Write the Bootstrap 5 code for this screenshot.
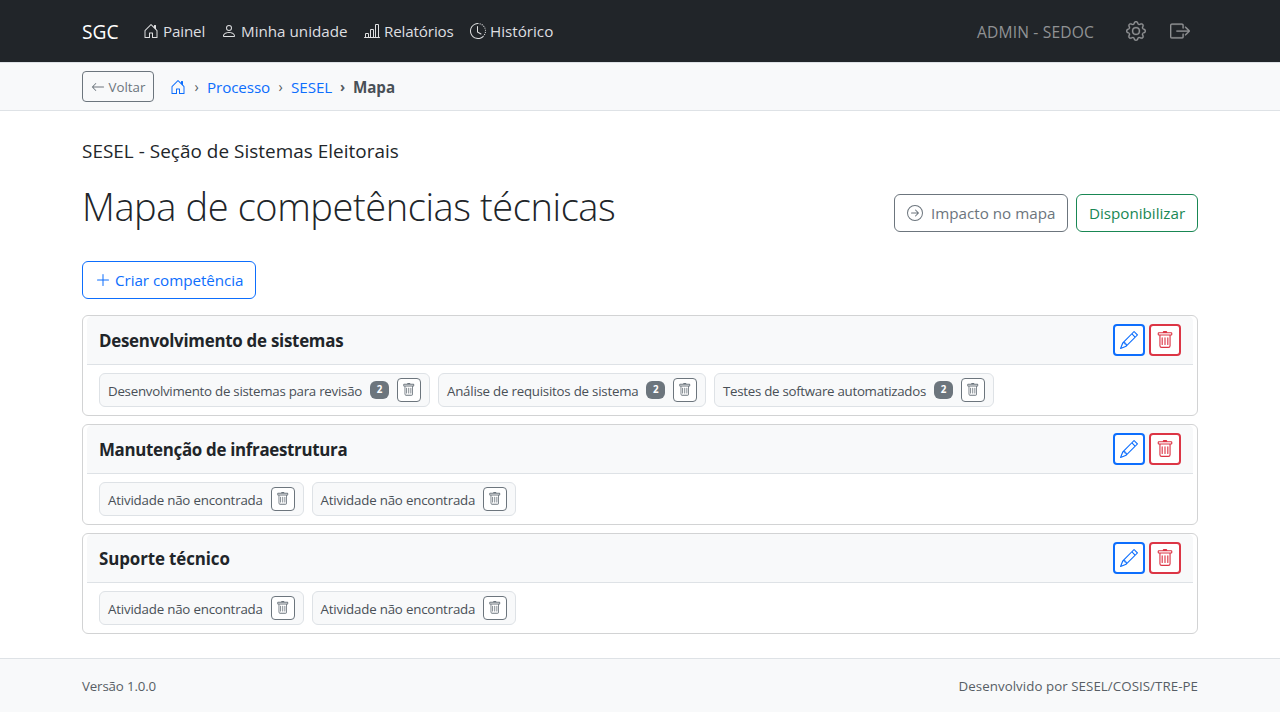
<!DOCTYPE html>
<html lang="pt-BR">
<head>
<meta charset="utf-8">
<meta name="viewport" content="width=device-width, initial-scale=1">
<title>SGC - Mapa de competências técnicas</title>
<link href="https://cdn.jsdelivr.net/npm/bootstrap@5.3.0/dist/css/bootstrap.min.css" rel="stylesheet">
<style>
body{font-family:"Open Sans","Noto Sans",sans-serif;font-size:15.2px;line-height:24px;color:#212529;background:#fff}
.page-box{width:1140px;padding:0 12px;margin:0 auto}
.ico{width:1em;height:1em;fill:currentColor;flex:none;font-size:16px}
.ico-20{font-size:20px}
.top-bar{height:62px}
.brand-name{font-size:19.2px;color:#fff;width:61px;padding-top:1px}
.top-link{gap:4px;color:#dedfe0;text-decoration:none;letter-spacing:-.15px}
.nav-1{width:62px}.nav-2{width:127px}.nav-3{width:90px}.nav-4{width:84px}
.nav-2,.nav-4{letter-spacing:0}
.top-side{color:#909294}
.top-side .ico{stroke:currentColor;stroke-width:.2}
.user-role{font-size:15.6px;letter-spacing:.16px;padding-top:1px}
.crumb-bar{height:49px;background:#f8f9fa;border-top:1px solid #dee2e6;border-bottom:1px solid #dee2e6;letter-spacing:-.1px}
.btn{font-size:15.2px;line-height:24px;white-space:nowrap}
.back-btn{width:72px;height:31px;font-size:13.3px;border-radius:4px;letter-spacing:0}
.back-btn .ico{font-size:14px}
.crumb-sep{width:21px;text-align:center;color:#545b62;font-size:14px;padding-top:1px}
.crumb-now{color:#495057}
.unit-name{font-size:18.9px;line-height:24px;letter-spacing:.04px}
.title-row{margin-top:19px}
.title-acts{margin-top:12px}
.page-title{font-size:38px;line-height:48px;font-weight:300;letter-spacing:-.41px}
.impact-btn,.add-btn{width:174px}
.add-btn{margin-top:29px;letter-spacing:-.05px}
.ready-btn{width:122px}
.skill-card{border:1px solid #d2d3d4;border-radius:6px;height:101px;padding:0 4px}
.skill-head{height:49px;background:#f8f9fa;border-bottom:1px solid #dee2e6;border-radius:5px 5px 0 0;padding:0 12px}
.skill-title{font-size:16.9px;font-weight:700;letter-spacing:-.26px;line-height:24px;padding-top:2px}
.skill-title.tight{letter-spacing:-.31px}
.skill-title.loose{letter-spacing:-.1px}
.act-btn{width:32px;height:32px;border-width:2px;border-radius:4px;background:#fff}
.act-btn .ico{font-size:18px}
.task-list{padding:8px 12px}
.task-chip{height:34px;border:1px solid #dee2e6;border-radius:6px;background:#f8f9fa;padding:0 8px;font-size:13.3px;color:#495057;white-space:nowrap;letter-spacing:-.26px}
.task-name{padding-top:2px}
.chip-a{width:331px}.chip-b{width:268px;letter-spacing:-.23px}.chip-c{width:280px;letter-spacing:-.28px}
.chip-none{width:204.5px;letter-spacing:-.19px}
.count-tag{width:19px;height:18px;border-radius:6px;background:#6c757d;color:#fff;font-size:9.8px;font-weight:700;line-height:18px;text-align:center;letter-spacing:0}
.del-btn{width:24px;height:24px;border-radius:4px;background:#fff}
.del-btn .ico{font-size:13.5px}
.foot-bar{height:54px;border-top:1px solid #dee2e6;background:#f8f9fa;color:#575e65;font-size:13.3px}
.foot-ver{letter-spacing:-.15px}
.foot-by{letter-spacing:.06px}
</style>
</head>
<body>
<svg class="d-none" xmlns="http://www.w3.org/2000/svg">
<symbol id="house" viewBox="0 0 16 16"><path d="M8.354 1.146a.5.5 0 0 0-.708 0l-6 6A.5.5 0 0 0 1.5 7.5v7a.5.5 0 0 0 .5.5h4.5a.5.5 0 0 0 .5-.5v-4h2v4a.5.5 0 0 0 .5.5H14a.5.5 0 0 0 .5-.5v-7a.5.5 0 0 0-.146-.354L13 5.793V2.5a.5.5 0 0 0-.5-.5h-1a.5.5 0 0 0-.5.5v1.293zM2.5 14V7.707l5.5-5.5 5.5 5.5V14H10v-4a.5.5 0 0 0-.5-.5h-3a.5.5 0 0 0-.5.5v4z"/></symbol>
<symbol id="person" viewBox="0 0 16 16"><path d="M8 8a3 3 0 1 0 0-6 3 3 0 0 0 0 6m2-3a2 2 0 1 1-4 0 2 2 0 0 1 4 0m4 8c0 1-1 1-1 1H3s-1 0-1-1 1-4 6-4 6 3 6 4m-1-.004c-.001-.246-.154-.986-.832-1.664C11.516 10.68 10.289 10 8 10s-3.516.68-4.168 1.332c-.678.678-.83 1.418-.832 1.664z"/></symbol>
<symbol id="chart" viewBox="0 0 16 16"><path d="M11 2a1 1 0 0 1 1-1h2a1 1 0 0 1 1 1v12h.5a.5.5 0 0 1 0 1H.5a.5.5 0 0 1 0-1H1v-3a1 1 0 0 1 1-1h2a1 1 0 0 1 1 1v3h1V7a1 1 0 0 1 1-1h2a1 1 0 0 1 1 1v7h1zm1 12h2V2h-2zm-3 0V7H7v7zm-5 0v-3H2v3z"/></symbol>
<symbol id="clock" viewBox="0 0 16 16"><path d="M8.515 1.019A7 7 0 0 0 8 1V0a8 8 0 0 1 .589.022zm2.004.45a7 7 0 0 0-.985-.299l.219-.976q.576.129 1.126.342zm1.37.71a7 7 0 0 0-.439-.27l.493-.87a8 8 0 0 1 .979.654l-.615.789a7 7 0 0 0-.418-.302zm1.834 1.79a7 7 0 0 0-.653-.796l.724-.69q.406.429.747.91zm.744 1.352a7 7 0 0 0-.214-.468l.893-.45a8 8 0 0 1 .45 1.088l-.95.313a7 7 0 0 0-.179-.483m.53 2.507a7 7 0 0 0-.1-1.025l.985-.17q.1.58.116 1.17zm-.131 1.538q.05-.254.081-.51l.993.123a8 8 0 0 1-.23 1.155l-.964-.267q.069-.247.12-.501m-.952 2.379q.276-.436.486-.908l.914.405q-.24.54-.555 1.038zm-.964 1.205q.183-.183.35-.378l.758.653a8 8 0 0 1-.401.432z"/><path d="M8 1a7 7 0 1 0 4.95 11.95l.707.707A8.001 8.001 0 1 1 8 0z"/><path d="M7.5 3a.5.5 0 0 1 .5.5v5.21l3.248 1.856a.5.5 0 0 1-.496.868l-3.5-2A.5.5 0 0 1 7 9V3.5a.5.5 0 0 1 .5-.5"/></symbol>
<symbol id="gear" viewBox="0 0 16 16"><path d="M8 4.754a3.246 3.246 0 1 0 0 6.492 3.246 3.246 0 0 0 0-6.492M5.754 8a2.246 2.246 0 1 1 4.492 0 2.246 2.246 0 0 1-4.492 0"/><path d="M9.796 1.343c-.527-1.79-3.065-1.79-3.592 0l-.094.319a.873.873 0 0 1-1.255.52l-.292-.16c-1.64-.892-3.433.902-2.54 2.541l.159.292a.873.873 0 0 1-.52 1.255l-.319.094c-1.79.527-1.79 3.065 0 3.592l.319.094a.873.873 0 0 1 .52 1.255l-.16.292c-.892 1.64.901 3.434 2.541 2.54l.292-.159a.873.873 0 0 1 1.255.52l.094.319c.527 1.79 3.065 1.79 3.592 0l.094-.319a.873.873 0 0 1 1.255-.52l.292.16c1.64.893 3.434-.902 2.54-2.541l-.159-.292a.873.873 0 0 1 .52-1.255l.319-.094c1.79-.527 1.79-3.065 0-3.592l-.319-.094a.873.873 0 0 1-.52-1.255l.16-.292c.893-1.64-.902-3.433-2.541-2.54l-.292.159a.873.873 0 0 1-1.255-.52zm-2.633.283c.246-.835 1.428-.835 1.674 0l.094.319a1.873 1.873 0 0 0 2.693 1.115l.291-.16c.764-.415 1.6.42 1.184 1.185l-.159.292a1.873 1.873 0 0 0 1.116 2.692l.318.094c.835.246.835 1.428 0 1.674l-.319.094a1.873 1.873 0 0 0-1.115 2.693l.16.291c.415.764-.42 1.6-1.185 1.184l-.291-.159a1.873 1.873 0 0 0-2.693 1.116l-.094.318c-.246.835-1.428.835-1.674 0l-.094-.319a1.873 1.873 0 0 0-2.692-1.115l-.292.16c-.764.415-1.6-.42-1.184-1.185l.159-.291A1.873 1.873 0 0 0 1.945 8.93l-.319-.094c-.835-.246-.835-1.428 0-1.674l.319-.094A1.873 1.873 0 0 0 3.06 4.377l-.16-.292c-.415-.764.42-1.6 1.185-1.184l.292.159a1.873 1.873 0 0 0 2.692-1.115z"/></symbol>
<symbol id="exit" viewBox="0 0 16 16"><path d="M10 12.5a.5.5 0 0 1-.5.5h-8a.5.5 0 0 1-.5-.5v-9a.5.5 0 0 1 .5-.5h8a.5.5 0 0 1 .5.5v2a.5.5 0 0 0 1 0v-2A1.5 1.5 0 0 0 9.5 2h-8A1.5 1.5 0 0 0 0 3.5v9A1.5 1.5 0 0 0 1.5 14h8a1.5 1.5 0 0 0 1.5-1.5v-2a.5.5 0 0 0-1 0z"/><path d="M15.854 8.354a.5.5 0 0 0 0-.708l-3-3a.5.5 0 0 0-.708.708L14.293 7.5H5.5a.5.5 0 0 0 0 1h8.793l-2.147 2.146a.5.5 0 0 0 .708.708z"/></symbol>
<symbol id="back" viewBox="0 0 16 16"><path d="M15 8a.5.5 0 0 0-.5-.5H2.707l3.147-3.146a.5.5 0 1 0-.708-.708l-4 4a.5.5 0 0 0 0 .708l4 4a.5.5 0 0 0 .708-.708L2.707 8.5H14.5A.5.5 0 0 0 15 8"/></symbol>
<symbol id="impact" viewBox="0 0 16 16"><path d="M1 8a7 7 0 1 0 14 0A7 7 0 0 0 1 8m15 0A8 8 0 1 1 0 8a8 8 0 0 1 16 0M4.5 7.5a.5.5 0 0 0 0 1h5.793l-2.147 2.146a.5.5 0 0 0 .708.708l3-3a.5.5 0 0 0 0-.708l-3-3a.5.5 0 1 0-.708.708L10.293 7.5z"/></symbol>
<symbol id="plus" viewBox="0 0 16 16"><path d="M8 2a.5.5 0 0 1 .5.5v5h5a.5.5 0 0 1 0 1h-5v5a.5.5 0 0 1-1 0v-5h-5a.5.5 0 0 1 0-1h5v-5A.5.5 0 0 1 8 2"/></symbol>
<symbol id="pencil" viewBox="0 0 16 16"><path d="M12.146.146a.5.5 0 0 1 .708 0l3 3a.5.5 0 0 1 0 .708l-10 10a.5.5 0 0 1-.168.11l-5 2a.5.5 0 0 1-.65-.65l2-5a.5.5 0 0 1 .11-.168zM11.207 2.5 13.5 4.793 14.793 3.5 12.5 1.207zm1.586 3L10.5 3.207 4 9.707V10h.5a.5.5 0 0 1 .5.5v.5h.5a.5.5 0 0 1 .5.5v.5h.293zm-9.761 5.175-.106.106-1.528 3.821 3.821-1.528.106-.106A.5.5 0 0 1 5 12.5V12h-.5a.5.5 0 0 1-.5-.5V11h-.5a.5.5 0 0 1-.468-.325"/></symbol>
<symbol id="trash" viewBox="0 0 16 16"><path d="M5.5 5.5A.5.5 0 0 1 6 6v6a.5.5 0 0 1-1 0V6a.5.5 0 0 1 .5-.5m2.5 0a.5.5 0 0 1 .5.5v6a.5.5 0 0 1-1 0V6a.5.5 0 0 1 .5-.5m3 .5a.5.5 0 0 0-1 0v6a.5.5 0 0 0 1 0z"/><path d="M14.5 3a1 1 0 0 1-1 1H13v9a2 2 0 0 1-2 2H5a2 2 0 0 1-2-2V4h-.5a1 1 0 0 1-1-1V2a1 1 0 0 1 1-1H6a1 1 0 0 1 1-1h2a1 1 0 0 1 1 1h3.5a1 1 0 0 1 1 1zM4.118 4 4 4.059V13a1 1 0 0 0 1 1h6a1 1 0 0 0 1-1V4.059L11.882 4zM2.5 3h11V2h-11z"/></symbol>
</svg>

<nav class="top-bar bg-dark">
 <div class="page-box d-flex align-items-center h-100">
  <a class="brand-name text-decoration-none" href="#">SGC</a>
  <div class="d-flex gap-3 text-nowrap">
   <a class="top-link nav-1 d-flex align-items-center" href="#"><svg class="ico"><use href="#house"/></svg><span>Painel</span></a>
   <a class="top-link nav-2 d-flex align-items-center" href="#"><svg class="ico"><use href="#person"/></svg><span>Minha unidade</span></a>
   <a class="top-link nav-3 d-flex align-items-center" href="#"><svg class="ico"><use href="#chart"/></svg><span>Relatórios</span></a>
   <a class="top-link nav-4 d-flex align-items-center" href="#"><svg class="ico"><use href="#clock"/></svg><span>Histórico</span></a>
  </div>
  <div class="top-side d-flex align-items-center ms-auto pe-2">
   <span class="user-role me-4">ADMIN - SEDOC</span>
   <svg class="ico ico-20 ms-2 me-4"><use href="#gear"/></svg>
   <svg class="ico ico-20"><use href="#exit"/></svg>
  </div>
 </div>
</nav>

<div class="crumb-bar">
 <div class="page-box d-flex align-items-center h-100">
  <button class="btn btn-outline-secondary back-btn d-flex align-items-center justify-content-center gap-1 p-0 me-3"><svg class="ico"><use href="#back"/></svg>Voltar</button>
  <nav class="d-flex align-items-center">
   <a class="d-flex" href="#"><svg class="ico"><use href="#house"/></svg></a><span class="crumb-sep">›</span>
   <a class="text-decoration-none" href="#">Processo</a><span class="crumb-sep">›</span>
   <a class="text-decoration-none" href="#">SESEL</a><span class="crumb-sep fw-bold">›</span>
   <span class="crumb-now fw-bold">Mapa</span>
  </nav>
 </div>
</div>

<main class="page-box pt-4">
 <div class="unit-name pt-1">SESEL - Seção de Sistemas Eleitorais</div>
 <div class="title-row d-flex justify-content-between align-items-start">
  <h1 class="page-title m-0">Mapa de competências técnicas</h1>
  <div class="title-acts d-flex gap-2">
   <button class="btn btn-outline-secondary impact-btn d-flex align-items-center px-0 ps-2"><svg class="ico ms-1 me-2"><use href="#impact"/></svg>Impacto no mapa</button>
   <button class="btn btn-outline-success ready-btn px-0">Disponibilizar</button>
  </div>
 </div>
 <button class="btn btn-outline-primary add-btn d-flex align-items-center gap-1 pe-0"><svg class="ico"><use href="#plus"/></svg>Criar competência</button>

 <div class="d-flex flex-column gap-2 mt-3 mb-4">
  <section class="skill-card">
   <div class="skill-head d-flex align-items-center gap-1">
    <div class="skill-title me-auto">Desenvolvimento de sistemas</div>
    <button class="btn btn-outline-primary act-btn d-flex align-items-center justify-content-center p-0"><svg class="ico"><use href="#pencil"/></svg></button>
    <button class="btn btn-outline-danger act-btn d-flex align-items-center justify-content-center p-0"><svg class="ico"><use href="#trash"/></svg></button>
   </div>
   <div class="task-list d-flex gap-2">
    <div class="task-chip chip-a d-flex align-items-center gap-2"><span class="task-name me-auto">Desenvolvimento de sistemas para revisão</span><span class="count-tag">2</span><button class="btn btn-outline-secondary del-btn d-flex align-items-center justify-content-center p-0"><svg class="ico"><use href="#trash"/></svg></button></div>
    <div class="task-chip chip-b d-flex align-items-center gap-2"><span class="task-name me-auto">Análise de requisitos de sistema</span><span class="count-tag">2</span><button class="btn btn-outline-secondary del-btn d-flex align-items-center justify-content-center p-0"><svg class="ico"><use href="#trash"/></svg></button></div>
    <div class="task-chip chip-c d-flex align-items-center gap-2"><span class="task-name me-auto">Testes de software automatizados</span><span class="count-tag">2</span><button class="btn btn-outline-secondary del-btn d-flex align-items-center justify-content-center p-0"><svg class="ico"><use href="#trash"/></svg></button></div>
   </div>
  </section>

  <section class="skill-card">
   <div class="skill-head d-flex align-items-center gap-1">
    <div class="skill-title tight me-auto">Manutenção de infraestrutura</div>
    <button class="btn btn-outline-primary act-btn d-flex align-items-center justify-content-center p-0"><svg class="ico"><use href="#pencil"/></svg></button>
    <button class="btn btn-outline-danger act-btn d-flex align-items-center justify-content-center p-0"><svg class="ico"><use href="#trash"/></svg></button>
   </div>
   <div class="task-list d-flex gap-2">
    <div class="task-chip chip-none d-flex align-items-center gap-2"><span class="task-name me-auto">Atividade não encontrada</span><button class="btn btn-outline-secondary del-btn d-flex align-items-center justify-content-center p-0"><svg class="ico"><use href="#trash"/></svg></button></div>
    <div class="task-chip chip-none d-flex align-items-center gap-2"><span class="task-name me-auto">Atividade não encontrada</span><button class="btn btn-outline-secondary del-btn d-flex align-items-center justify-content-center p-0"><svg class="ico"><use href="#trash"/></svg></button></div>
   </div>
  </section>

  <section class="skill-card">
   <div class="skill-head d-flex align-items-center gap-1">
    <div class="skill-title loose me-auto">Suporte técnico</div>
    <button class="btn btn-outline-primary act-btn d-flex align-items-center justify-content-center p-0"><svg class="ico"><use href="#pencil"/></svg></button>
    <button class="btn btn-outline-danger act-btn d-flex align-items-center justify-content-center p-0"><svg class="ico"><use href="#trash"/></svg></button>
   </div>
   <div class="task-list d-flex gap-2">
    <div class="task-chip chip-none d-flex align-items-center gap-2"><span class="task-name me-auto">Atividade não encontrada</span><button class="btn btn-outline-secondary del-btn d-flex align-items-center justify-content-center p-0"><svg class="ico"><use href="#trash"/></svg></button></div>
    <div class="task-chip chip-none d-flex align-items-center gap-2"><span class="task-name me-auto">Atividade não encontrada</span><button class="btn btn-outline-secondary del-btn d-flex align-items-center justify-content-center p-0"><svg class="ico"><use href="#trash"/></svg></button></div>
   </div>
  </section>
 </div>
</main>

<footer class="foot-bar">
 <div class="page-box d-flex justify-content-between align-items-center h-100">
  <span class="foot-ver">Versão 1.0.0</span><span class="foot-by">Desenvolvido por SESEL/COSIS/TRE-PE</span>
 </div>
</footer>
<script src="https://cdn.jsdelivr.net/npm/bootstrap@5.3.0/dist/js/bootstrap.bundle.min.js"></script>
</body>
</html>
